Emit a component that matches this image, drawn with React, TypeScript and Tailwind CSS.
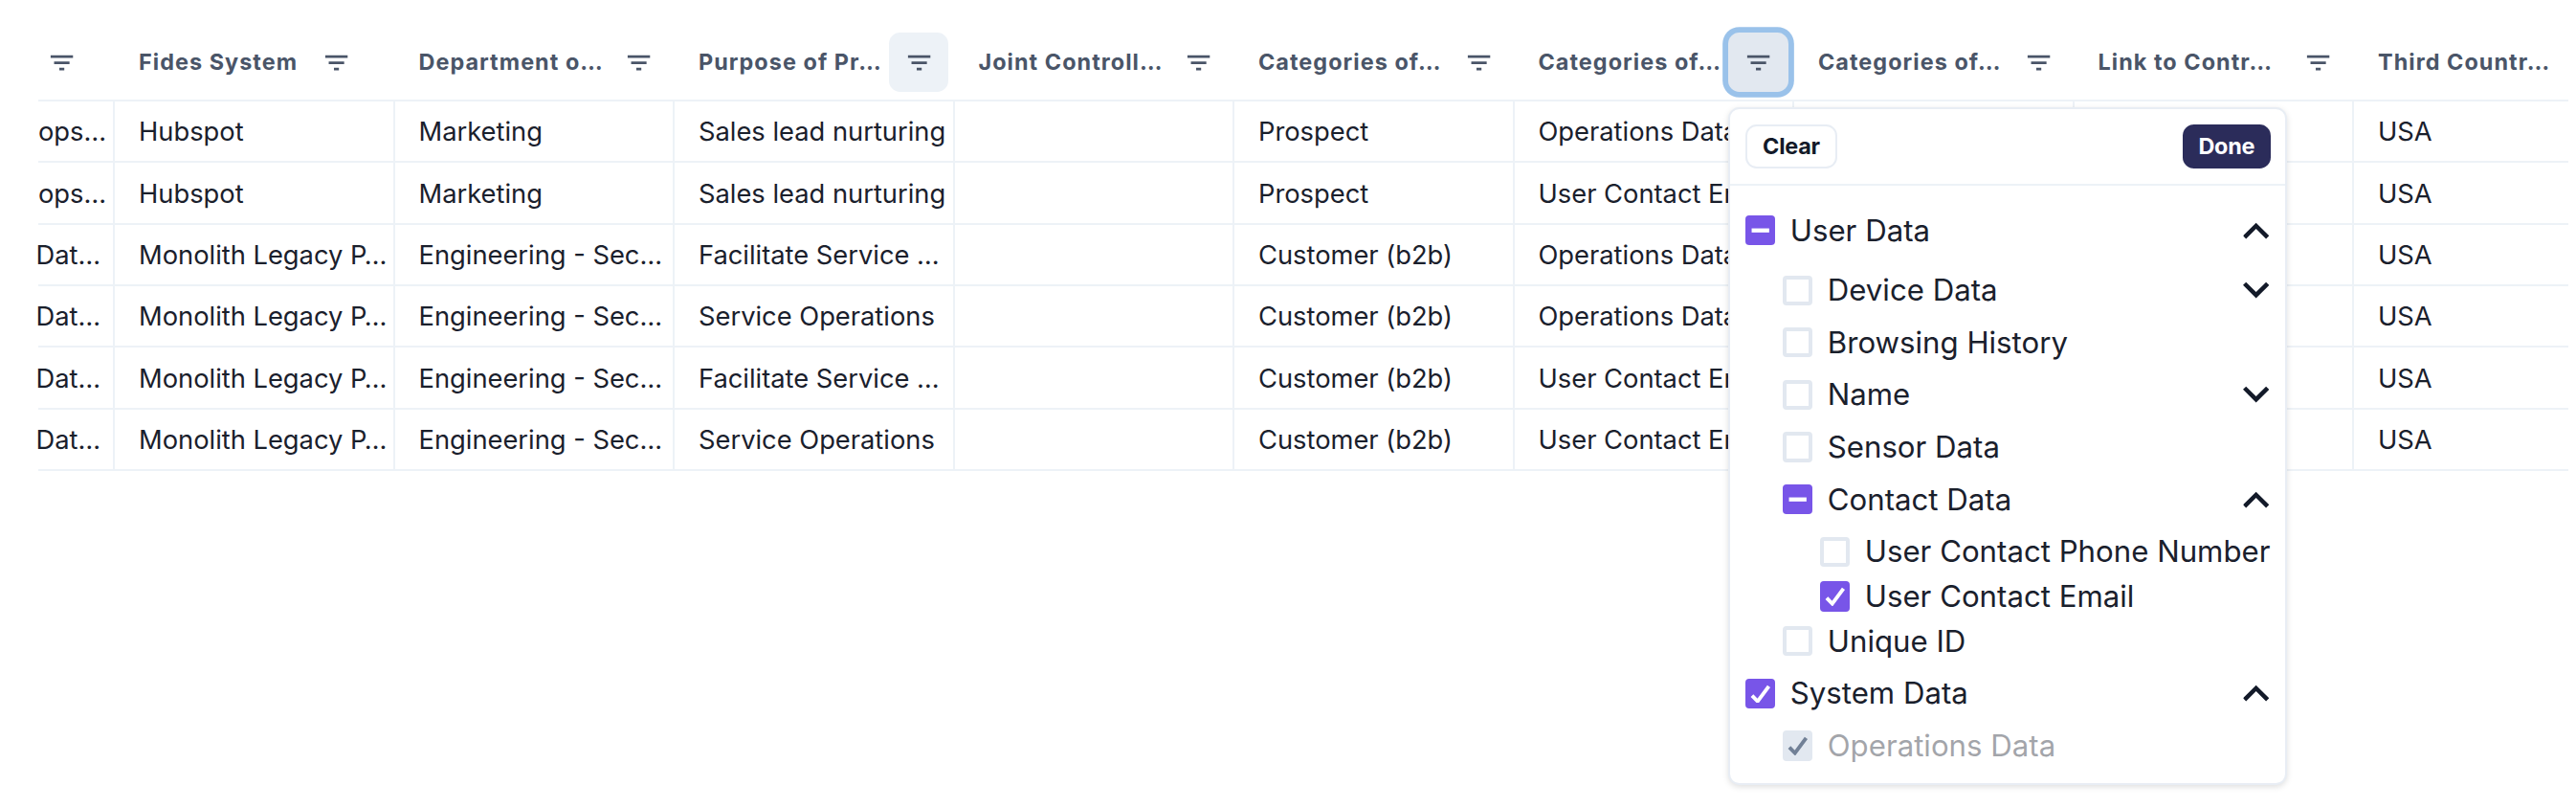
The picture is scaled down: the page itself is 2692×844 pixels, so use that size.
type FilterState = "none" | "idle" | "hover" | "active";

interface Column {
  title: string;
  filter: FilterState;
}

const columns: Column[] = [
  { title: "Fides System", filter: "idle" },
  { title: "Department o…", filter: "idle" },
  { title: "Purpose of Pr…", filter: "hover" },
  { title: "Joint Controll…", filter: "idle" },
  { title: "Categories of…", filter: "idle" },
  { title: "Categories of…", filter: "active" },
  { title: "Categories of…", filter: "idle" },
  { title: "Link to Contr…", filter: "idle" },
  { title: "Third Countr…", filter: "none" },
];

const rows: string[][] = [
  ["ops…", "Hubspot", "Marketing", "Sales lead nurturing", "", "Prospect", "Operations Data", "", "", "USA"],
  ["ops…", "Hubspot", "Marketing", "Sales lead nurturing", "", "Prospect", "User Contact Em…", "", "", "USA"],
  ["Dat…", "Monolith Legacy P…", "Engineering - Sec…", "Facilitate Service …", "", "Customer (b2b)", "Operations Data", "", "", "USA"],
  ["Dat…", "Monolith Legacy P…", "Engineering - Sec…", "Service Operations", "", "Customer (b2b)", "Operations Data", "", "", "USA"],
  ["Dat…", "Monolith Legacy P…", "Engineering - Sec…", "Facilitate Service …", "", "Customer (b2b)", "User Contact Em…", "", "", "USA"],
  ["Dat…", "Monolith Legacy P…", "Engineering - Sec…", "Service Operations", "", "Customer (b2b)", "User Contact Em…", "", "", "USA"],
];

type CheckState = "off" | "on" | "partial" | "disabled";

interface TreeItem {
  label: string;
  state: CheckState;
  depth: 0 | 1 | 2;
  chevron?: "up" | "down";
  size: string;
}

const tree: TreeItem[] = [
  { label: "User Data", state: "partial", depth: 0, chevron: "up", size: "h-[54.6px] mb-[8px]" },
  { label: "Device Data", state: "off", depth: 1, chevron: "down", size: "h-[54.6px]" },
  { label: "Browsing History", state: "off", depth: 1, size: "h-[54.6px]" },
  { label: "Name", state: "off", depth: 1, chevron: "down", size: "h-[54.6px]" },
  { label: "Sensor Data", state: "off", depth: 1, size: "h-[54.6px]" },
  { label: "Contact Data", state: "partial", depth: 1, chevron: "up", size: "h-[54.6px] mb-[3.9px]" },
  { label: "User Contact Phone Number", state: "off", depth: 2, size: "h-[46.8px]" },
  { label: "User Contact Email", state: "on", depth: 2, size: "h-[46.8px]" },
  { label: "Unique ID", state: "off", depth: 1, size: "h-[46.8px] mb-[3.9px]" },
  { label: "System Data", state: "on", depth: 0, chevron: "up", size: "h-[54.6px]" },
  { label: "Operations Data", state: "disabled", depth: 1, size: "h-[54.6px]" },
];

const indent = ["pl-0", "pl-[39px]", "pl-[78px]"];

function FilterIcon() {
  return (
    <svg viewBox="0 0 24 24" className="size-[31.2px]" fill="currentColor">
      <path d="M10 18h4v-2h-4v2zM3 6v2h18V6H3zm2.8 7h12.4v-2H5.8v2z" />
    </svg>
  );
}

const filterButton: Record<FilterState, string> = {
  none: "hidden",
  idle: "",
  hover: "bg-[#edf2f7]",
  active: "bg-[#e2e8f0] ring-[5.85px] ring-[#9ac2ea]",
};

function FilterButton({ state }: { state: FilterState }) {
  return (
    <button
      className={`flex size-[62.4px] shrink-0 items-center justify-center rounded-[11.7px] ${filterButton[state]}`}
    >
      <FilterIcon />
    </button>
  );
}

function Chevron({ direction }: { direction: "up" | "down" }) {
  return (
    <svg
      viewBox="6 8.3 12 8"
      className={`mr-[2px] ml-auto h-[18.2px] w-[27.3px] ${direction === "up" ? "rotate-180" : ""}`}
      fill="#131a29"
    >
      <path d="M16.59 8.59L12 13.17 7.41 8.59 6 10l6 6 6-6z" />
    </svg>
  );
}

const boxStyle: Record<CheckState, string> = {
  off: "border-4 border-[#e2e8f0] bg-white",
  on: "bg-[#7855e8] text-white",
  partial: "bg-[#7855e8] text-white",
  disabled: "bg-[#e2e8f0] text-[#718096]",
};

function Checkbox({ state }: { state: CheckState }) {
  return (
    <span
      className={`flex size-[31.2px] shrink-0 items-center justify-center rounded-[3.9px] ${boxStyle[state]}`}
    >
      {(state === "on" || state === "disabled") && (
        <svg viewBox="0 0 12 10" className="h-[19.5px] w-[23.4px]" fill="none" stroke="currentColor" strokeWidth="2">
          <polyline points="1.5 6 4.5 9 10.5 1" />
        </svg>
      )}
      {state === "partial" && (
        <svg viewBox="0 0 24 24" className="size-[23.4px]" stroke="currentColor" strokeWidth="4.4">
          <line x1="21.4" x2="2.6" y1="12" y2="12" />
        </svg>
      )}
    </span>
  );
}

function FilterMenu() {
  return (
    <div className="absolute top-[112px] left-[1806.4px] w-[584px] rounded-[11.7px] border-2 border-[#e8edf4] bg-white shadow-[0_2px_6px_rgba(0,0,0,0.13)]">
      <div className="flex h-[80px] items-center justify-between border-b-2 border-[#edf2f7] px-[15.6px]">
        <button className="h-[46.8px] w-[96px] rounded-[11.7px] border-2 border-[#e8edf4] text-[23.4px] leading-none font-bold tracking-[-0.01em] text-[#131a29]">
          Clear
        </button>
        <button className="h-[46.8px] w-[92px] rounded-[11.7px] bg-[#2b2c5a] text-[23.4px] leading-none font-bold tracking-[-0.01em] text-white">
          Done
        </button>
      </div>
      <div className="flex flex-col px-[15.6px] pt-[19.4px] pb-[11.3px]">
        {tree.map((item) => (
          <div key={item.label} className={`flex shrink-0 items-center ${indent[item.depth]} ${item.size}`}>
            <Checkbox state={item.state} />
            <span
              className={`ml-[15.6px] pt-px text-[31.2px] leading-none whitespace-nowrap text-[#1a202c] ${item.state === "disabled" ? "opacity-40" : ""}`}
            >
              {item.label}
            </span>
            {item.chevron && <Chevron direction={item.chevron} />}
          </div>
        ))}
      </div>
    </div>
  );
}

export default function App() {
  return (
    <div className="relative h-[844px] w-[2692px] overflow-hidden bg-white pl-[40px] font-['Inter',sans-serif]">
      <div className="w-[2644px]">
        <div className="flex h-[106px] border-b-2 border-[#edf2f7] pt-[34px] text-[#4a5568]">
          <div className="w-[80.6px] shrink-0">
            <div className="-ml-[7px]">
              <FilterButton state="idle" />
            </div>
          </div>
          {columns.map((column, i) => (
            <div
              key={i}
              className={`flex h-[62.4px] shrink-0 items-center pl-[24.4px] ${i === 8 ? "w-[223.4px]" : "w-[292.5px]"}`}
            >
              <div
                className={`text-[23.4px] leading-none font-bold tracking-[0.045em] whitespace-nowrap ${i === 0 ? "w-[175.6px]" : "w-[199px]"}`}
              >
                {column.title}
              </div>
              <FilterButton state={column.filter} />
            </div>
          ))}
        </div>
        {rows.map((row, r) => (
          <div key={r} className="flex h-[64.35px] border-b-2 border-[#edf2f7]">
            {row.map((cell, c) => (
              <div
                key={c}
                className={`flex shrink-0 items-center pt-[1.5px] text-[27.3px] leading-none whitespace-nowrap text-[#1a202c] ${c === 0 ? "w-[80px]" : c === 9 ? "w-[224px] pl-[25px]" : "w-[292.5px] pl-[25px]"} ${c === 9 ? "" : "border-r-2 border-[#edf2f7]"}`}
              >
                <span className={c === 0 ? (r < 2 ? "" : "-ml-[2.5px]") : ""}>{cell}</span>
              </div>
            ))}
          </div>
        ))}
      </div>
      <FilterMenu />
    </div>
  );
}
